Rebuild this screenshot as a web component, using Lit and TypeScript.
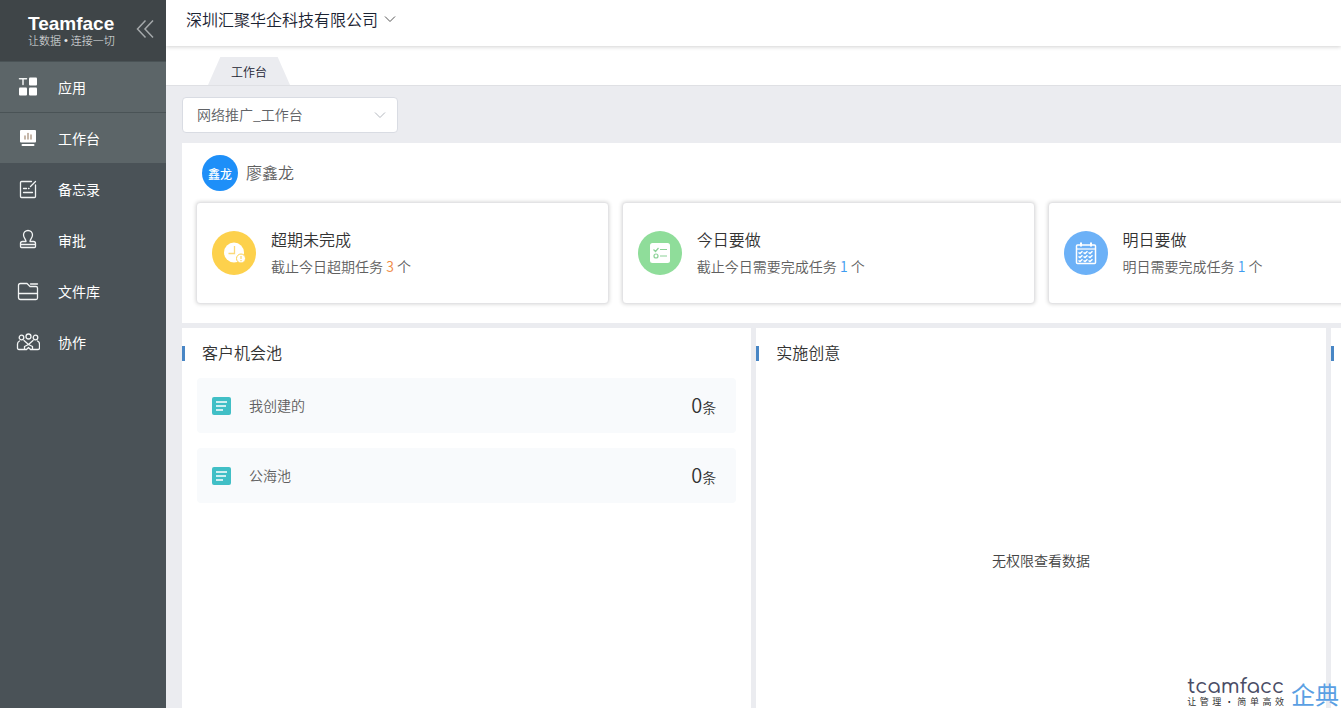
import { LitElement, html, css, svg } from "lit";
import { customElement, property, state } from "lit/decorators.js";
import { classMap } from "lit/directives/class-map.js";

const stroke = (body: unknown) => html`<svg width="24" height="24" viewBox="0 0 24 24" fill="none" stroke="#f2f4f4" stroke-width="1.3" stroke-linejoin="round" stroke-linecap="round" aria-hidden="true">${body}</svg>`;

const navIcons: Record<string, unknown> = {
  apps: stroke(svg`<g fill="#fff" stroke="none"><rect x="13" y="2.500" width="8" height="8" rx="1"/><rect x="3" y="12.500" width="8" height="8" rx="1"/><rect x="13" y="12.500" width="8" height="8" rx="1"/></g><path d="M3.500 3.700H10.500M7 3.700V9.500" stroke-width="1.500"/>`),
  desk: stroke(svg`<rect x="4" y="4" width="16" height="12.500" rx="1" fill="#fff" stroke="none"/><path d="M6.500 19H17.500" stroke="#fff" stroke-width="2"/><path d="M9 10V13" stroke="#a8917c"/><path d="M12 7.500V13" stroke="#a8917c"/><path d="M15 9V13" stroke="#a8917c"/>`),
  memo: stroke(svg`<path d="M19.500 8V19.500Q19.500 20.500 18.500 20.500H5.500Q4.500 20.500 4.500 19.500V5.500Q4.500 4.500 5.500 4.500H15.500M19.500 4.500L14.500 9.500M7.500 11.500H10.500M12.500 11.500H13M7.500 15.500H16.500"/>`),
  stamp: stroke(svg`<path d="M10 13.500C10 11 7.500 10 7.500 7A4.500 4.500 0 0 1 16.500 7C16.500 10 14 11 14 13.500H17.500Q19.500 13.500 19.500 15.500V18.500Q19.500 19.500 18.500 19.500H5.500Q4.500 19.500 4.500 18.500V15.500Q4.500 13.500 6.500 13.500ZM4.500 16.500H19.500"/>`),
  folder: stroke(svg`<path d="M4.500 4.500H11L14 7.500H20Q21.500 7.500 21.500 9V19Q21.500 20.500 20 20.500H4.500Q2.500 20.500 2.500 18.500V6.500Q2.500 4.500 4.500 4.500ZM2.500 14.500H21.500M14.500 5H21.500"/>`),
  team: stroke(svg`<circle cx="12.500" cy="6.500" r="2.500"/><circle cx="5.500" cy="7.500" r="2.300"/><circle cx="19.500" cy="7.500" r="2.300"/><path d="M8.500 19.500H3Q1.500 19.500 1.500 18V14Q1.500 12 3.500 11M16.500 19.500H21.500Q23.500 19.500 23.500 18V14Q23.500 12 21.500 11M8.500 19.500V16.500L12.500 14.500L16.500 16.500V19.500M8.500 19.500H10.500L12.500 17.500L14.500 19.500H16.500M8 10.500L12.500 14.500L17 10.500"/>`),
};

const taskIcons: Record<string, unknown> = {
  overdue: html`<svg width="44" height="44" viewBox="0 0 44 44" aria-hidden="true"><circle cx="22" cy="22" r="22" fill="#fdd14c"/><circle cx="22" cy="21.500" r="10" fill="#fff"/><path d="M22.500 15V22.500H16.500" fill="none" stroke="#fbd97a" stroke-width="1.300"/><circle cx="29" cy="27.500" r="4.500" fill="#fff" stroke="#fdd14c"/><path d="M29 25V28M29 29V30.200" stroke="#fbd97a" stroke-width="1.300"/></svg>`,
  today: html`<svg width="44" height="44" viewBox="0 0 44 44" aria-hidden="true"><circle cx="22" cy="22" r="22" fill="#8fdd9a"/><rect x="12" y="12" width="20" height="20" rx="2.500" fill="#fff"/><g fill="none" stroke="#8bd197" stroke-width="1.200"><path d="M15.500 18.500L17.500 20.500L20.500 17M22 18.500H29M22 25H29"/><circle cx="18" cy="25" r="2"/></g></svg>`,
  tomorrow: html`<svg width="44" height="44" viewBox="0 0 44 44" aria-hidden="true"><circle cx="22" cy="22" r="22" fill="#6cb1f7"/><g fill="none" stroke="#fff"><rect x="12.500" y="14" width="19" height="18.500" rx="1" stroke-width="1.500"/><path d="M12.500 18H31.500" stroke-width="1.200"/><path d="M17 11.500V15.500M27 11.500V15.500" stroke-width="2"/><path d="M14.500 21.500l1.500 1 2.500-2.200M19.500 21.500l1.500 1 2.500-2.200M24.500 21.500l1.500 1 2.500-2.200M14.500 25.500l1.500 1 2.500-2.200M19.500 25.500l1.500 1 2.500-2.200M24.500 25.500l1.500 1 2.500-2.200M14.500 29.500l1.500 1 2.500-2.200M19.500 29.500l1.500 1 2.500-2.200M24.500 29.500l1.500 1 2.500-2.200" stroke-width="1.500"/></g></svg>`,
};

const chevron = (color: string) => html`<svg class="chevron" width="12" height="8" viewBox="0 0 12 8" fill="none" stroke=${color} aria-hidden="true"><path d="M1 1.500L6 6.500L11 1.500"/></svg>`;

const NAV = [
  { icon: "apps", label: "应用" },
  { icon: "desk", label: "工作台" },
  { icon: "memo", label: "备忘录" },
  { icon: "stamp", label: "审批" },
  { icon: "folder", label: "文件库" },
  { icon: "team", label: "协作" },
];

const TASKS = [
  { icon: "overdue", title: "超期未完成", text: "截止今日超期任务", count: 3, tone: "warn" },
  { icon: "today", title: "今日要做", text: "截止今日需要完成任务", count: 1, tone: "info" },
  { icon: "tomorrow", title: "明日要做", text: "明日需要完成任务", count: 1, tone: "info" },
];

@customElement("side-nav")
class SideNav extends LitElement {
  @state() private active = 1;

  static styles = css`
    :host { display: block; background: #4a5257; color: #fff; font-weight: 400; }
    .brand { display: flex; align-items: flex-start; justify-content: space-between; height: 61px; box-sizing: border-box; padding: 14px 12px 0 28px; background: #3f4548; }
    .name { font: 700 19px/20px "Liberation Sans", Arial, sans-serif; }
    .slogan { display: flex; gap: 3px; font-size: 11px; line-height: 12px; font-weight: 300; color: #e4e6e7; white-space: nowrap; }
    .dot { font-family: "Liberation Sans", sans-serif; }
    .fold { display: flex; margin-top: 5px; padding: 0; border: 0; background: none; cursor: pointer; }
    a { display: flex; align-items: center; gap: 18px; height: 50px; padding-left: 16px; border-top: 1px solid transparent; color: #fff; font-size: 14px; text-decoration: none; }
    a.lit { background: #5c6568; border-top-color: #4a5356; }
  `;

  render() {
    return html`
      <div class="brand">
        <div>
          <div class="name">Teamface</div>
          <div class="slogan"><span>让数据</span><span class="dot">•</span><span>连接一切</span></div>
        </div>
        <button class="fold" aria-label="收起">
          <svg width="18" height="20" viewBox="0 0 18 20" fill="none" stroke="#a5a9ab" stroke-width="1.5"><path d="M9.500 1.500L1.500 10L9.500 18.500M17 1.500L9 10L17 18.500"/></svg>
        </button>
      </div>
      <nav>
        ${NAV.map((item, i) => html`<a href="#" class=${classMap({ lit: i === 0 || i === this.active })} @click=${(e: Event) => { e.preventDefault(); this.active = i; }}>${navIcons[item.icon]}<span>${item.label}</span></a>`)}
      </nav>`;
  }
}

@customElement("task-card")
class TaskCard extends LitElement {
  @property({ attribute: false }) task = TASKS[0];

  static styles = css`
    :host { display: flex; align-items: center; gap: 15px; height: 100px; padding-left: 15px; background: #fff; border: 1px solid #e3e3e5; border-radius: 4px; box-shadow: 0 0 4px rgba(0, 0, 0, 0.18); box-sizing: content-box; }
    svg { display: block; }
    .text { padding-bottom: 2px; }
    h3 { margin: 0; font-size: 16px; line-height: 28px; font-weight: inherit; color: #333; }
    p { margin: 0; font-size: 14px; line-height: 26px; color: #606060; }
    .warn { color: #ef8b45; }
    .info { color: #3e9cf0; }
  `;

  render() {
    const t = this.task;
    return html`${taskIcons[t.icon]}
      <div class="text">
        <h3>${t.title}</h3>
        <p>${t.text} <span class=${t.tone}>${t.count}</span> 个</p>
      </div>`;
  }
}

@customElement("board-column")
class BoardColumn extends LitElement {
  @property() heading = "";

  static styles = css`
    :host { display: flex; flex-direction: column; background: #fff; }
    header { display: flex; align-items: center; gap: 17px; height: 50px; }
    header::before { content: ""; width: 3px; height: 15px; background: #4886c5; }
    h2 { margin: 0; padding-bottom: 2px; font-size: 16px; font-weight: inherit; color: #333; }
    .body { display: flex; flex-direction: column; gap: 15px; min-height: 364px; padding: 0 15px 16px; }
  `;

  render() {
    return html`<header><h2>${this.heading}</h2></header><div class="body"><slot></slot></div>`;
  }
}

@customElement("app-root")
class AppRoot extends LitElement {
  static styles = css`
    :host { display: grid; grid-template-columns: 166px minmax(0, 1fr); height: 100vh; overflow: hidden; position: relative; background: #ebecf0; font-family: "Noto Sans CJK SC", sans-serif; font-weight: 350; }
    .main { display: flex; flex-direction: column; min-width: 0; overflow: hidden; }
    .top { flex: none; z-index: 1; display: flex; align-items: center; height: 38px; padding: 0 20px 8px; background: #fff; box-shadow: 0 1px 4px rgba(0, 0, 0, 0.18); }
    .company { display: flex; align-items: center; gap: 6px; padding: 0; border: 0; background: none; color: #1c2433; font: inherit; font-size: 16px; cursor: pointer; }
    .tabs { flex: none; display: flex; align-items: flex-end; height: 40px; padding-left: 42px; background: #fff; border-bottom: 1px solid #dfe0e4; box-sizing: border-box; }
    .tab { width: 82px; height: 28px; line-height: 30px; text-align: center; font-size: 12px; color: #1c2433; text-decoration: none; background: #ebecf0; clip-path: polygon(15% 0, 85% 0, 100% 100%, 0 100%); }
    .work { padding: 11px 0 0 16px; }
    .picker { display: grid; width: 216px; margin-bottom: 10px; align-items: center; }
    .picker > * { grid-area: 1 / 1; }
    .picker select { appearance: none; height: 36px; width: 100%; padding: 0 30px 2px 14px; border: 1px solid #d9dce3; border-radius: 4px; background: #fff; color: #606266; font: inherit; font-size: 14px; }
    .picker .chevron { justify-self: end; margin-right: 12px; pointer-events: none; }
    .board { min-width: 1718px; display: grid; gap: 5px; }
    .summary { background: #fff; padding: 12px 14px 19px; }
    .user { display: flex; align-items: center; gap: 8px; padding-left: 6px; margin-bottom: 11px; font-size: 16px; color: #606060; }
    .user-name { padding-bottom: 2px; }
    .avatar { display: grid; place-items: center; width: 36px; height: 36px; border-radius: 50%; background: #1e8ff8; color: #fff; font-size: 12px; font-weight: 500; }
    .cards { display: grid; grid-template-columns: repeat(4, minmax(0, 1fr)); gap: 13px; }
    .columns { display: grid; grid-template-columns: repeat(3, minmax(0, 1fr)); gap: 5px; }
    .row { display: flex; align-items: center; gap: 18px; height: 55px; padding: 0 20px 0 15px; border-radius: 4px; background: #f8fafc; font-size: 14px; color: #606060; }
    .row .label { padding-bottom: 1px; }
    .row .count { margin-left: auto; padding-bottom: 3px; color: #333; }
    .num { font-size: 20px; }
    .empty { margin: auto; font-size: 14px; color: #444; }
    .mark { position: absolute; right: 2px; bottom: 0; display: flex; align-items: flex-end; gap: 7px; pointer-events: none; }
    .logo { font: 500 20px/18px Comfortaa, Lato, sans-serif; color: #4a4d66; }
    .motto { display: flex; justify-content: space-between; font-size: 9px; line-height: 12px; font-weight: 400; color: #333; }
    .brand { font-size: 24px; line-height: 28px; font-weight: 400; color: #5a9fe3; }
  `;

  render() {
    return html`
      <side-nav></side-nav>
      <div class="main">
        <header class="top"><button class="company">深圳汇聚华企科技有限公司 ${chevron("#555")}</button></header>
        <nav class="tabs"><a class="tab" href="#">工作台</a></nav>
        <main class="work">
          <div class="picker">
            <select aria-label="工作台"><option>网络推广_工作台</option></select>
            ${chevron("#b4b8bf")}
          </div>
          <div class="board">
            <section class="summary">
              <div class="user"><span class="avatar">鑫龙</span><span class="user-name">廖鑫龙</span></div>
              <div class="cards">${TASKS.map((t) => html`<task-card .task=${t}></task-card>`)}</div>
            </section>
            <section class="columns">
              <board-column heading="客户机会池">
                ${["我创建的", "公海池"].map((name) => html`
                  <div class="row">
                    <svg width="19" height="18" viewBox="0 0 19 18" aria-hidden="true"><rect width="19" height="18" rx="2" fill="#41bfc6"/><path d="M4 5H15M4 9H14M4 13H11" stroke="#fff" stroke-width="1.600"/></svg>
                    <span class="label">${name}</span>
                    <span class="count"><span class="num">0</span>条</span>
                  </div>`)}
              </board-column>
              <board-column heading="实施创意"><p class="empty">无权限查看数据</p></board-column>
              <board-column></board-column>
            </section>
          </div>
        </main>
      </div>
      <div class="mark">
        <div>
          <div class="logo">tcamfacc</div>
          <div class="motto">${[..."让管理·简单高效"].map((c) => html`<span>${c}</span>`)}</div>
        </div>
        <span class="brand">企典</span>
      </div>`;
  }
}
